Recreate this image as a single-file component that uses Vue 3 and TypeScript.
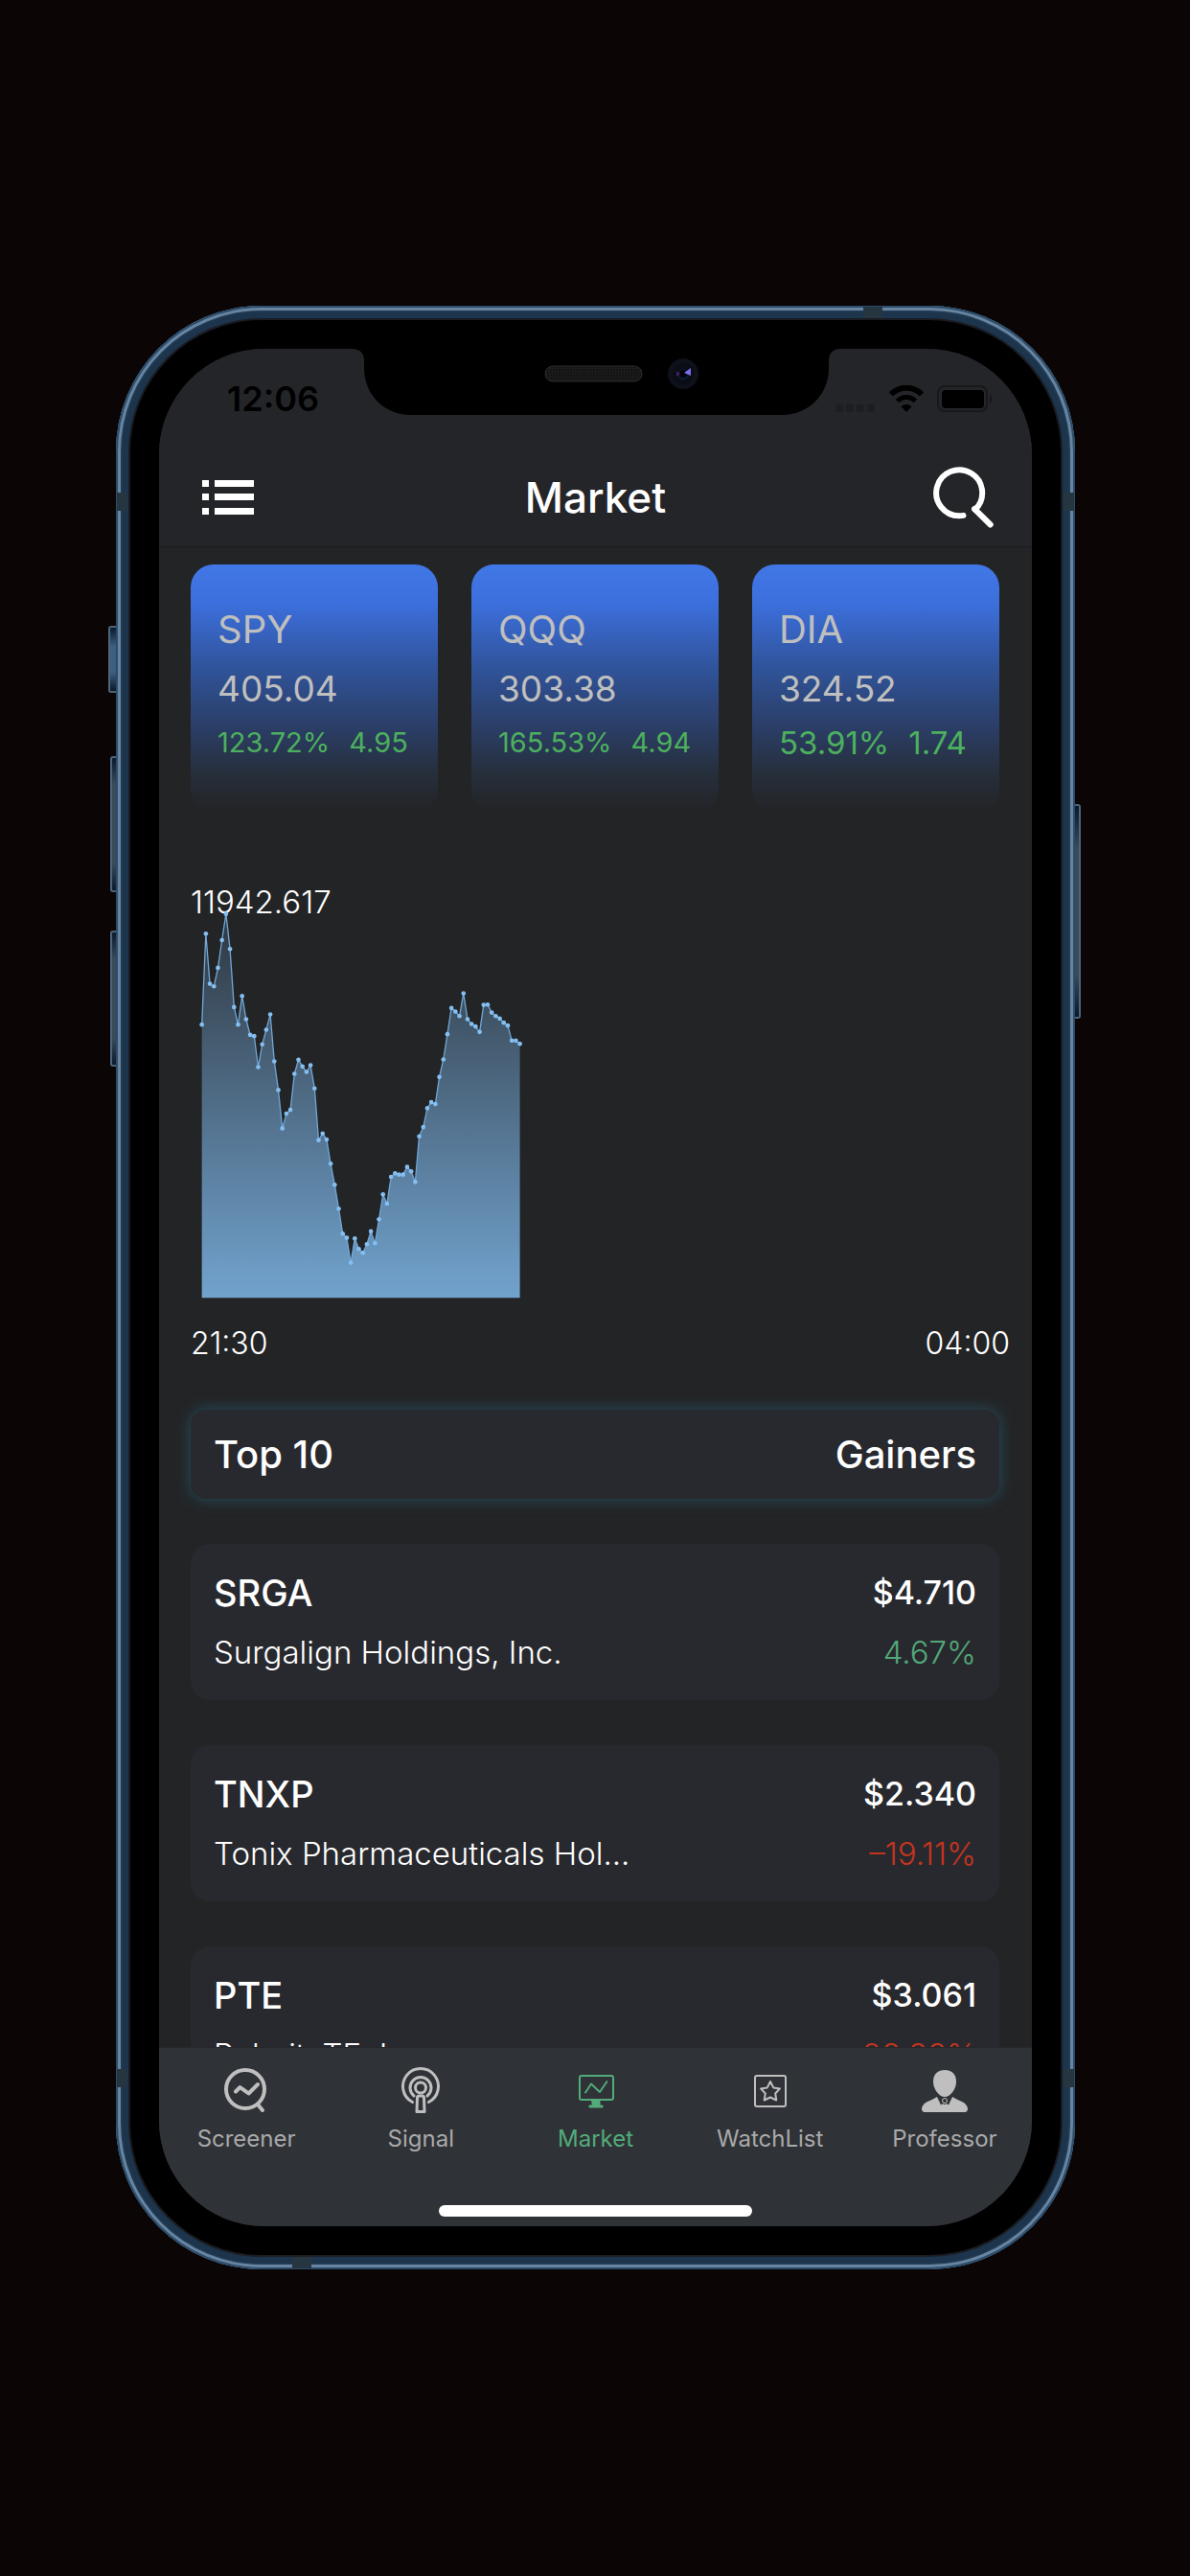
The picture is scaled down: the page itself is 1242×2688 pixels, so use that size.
<script setup lang="ts">
interface Fund {
  symbol: string
  price: string
  percent: string
  change: string
}

interface Stock {
  symbol: string
  name: string
  price: string
  percent: string
  down: boolean
}

interface Tab {
  id: string
  label: string
}

const funds: Fund[] = [
  { symbol: 'SPY', price: '405.04', percent: '123.72%', change: '4.95' },
  { symbol: 'QQQ', price: '303.38', percent: '165.53%', change: '4.94' },
  { symbol: 'DIA', price: '324.52', percent: '53.91%', change: '1.74' },
]

const stocks: Stock[] = [
  { symbol: 'SRGA', name: 'Surgalign Holdings, Inc.', price: '$4.710', percent: '4.67%', down: false },
  { symbol: 'TNXP', name: 'Tonix Pharmaceuticals Hol...', price: '$2.340', percent: '–19.11%', down: true },
  { symbol: 'PTE', name: 'PolarityTE, Inc.', price: '$3.061', percent: '–28.38%', down: true },
]

const tabs: Tab[] = [
  { id: 'screener', label: 'Screener' },
  { id: 'signal', label: 'Signal' },
  { id: 'market', label: 'Market' },
  { id: 'watchlist', label: 'WatchList' },
  { id: 'professor', label: 'Professor' },
]
const activeTab = 'market'

// Intraday samples, measured downwards from the chart's high mark.
const samples: number[] = [
  492, 216, 368, 376, 319, 235, 156, 262, 439, 492, 405, 475, 523, 527, 621, 552,
  507, 461, 603, 690, 806, 762, 750, 641, 598, 619, 635, 615, 685, 842, 822, 840,
  914, 978, 1050, 1126, 1138, 1214, 1140, 1172, 1184, 1158, 1119, 1155, 1082, 1007,
  1035, 954, 943, 947, 947, 924, 937, 969, 831, 803, 745, 727, 733, 651, 597, 521,
  441, 452, 466, 397, 475, 490, 498, 514, 432, 431, 455, 466, 473, 486, 495, 540,
  540, 550,
]
const startX = 35
const stepX = 12.62
const scaleY = 1.033
const baseline = 1364
const points = samples.map((v, i) => ({ x: startX + i * stepX, y: Math.round(v * scaleY) }))
const line = points.map((p) => `${p.x.toFixed(1)},${p.y}`).join(' ')
const lastX = points[points.length - 1].x.toFixed(1)
const area = `${startX},${baseline} ${line} ${lastX},${baseline}`
</script>

<template>
  <main class="page">
    <div class="phone">
      <span class="key key-mute"></span>
      <span class="key key-up"></span>
      <span class="key key-down"></span>
      <span class="key key-power"></span>
      <span class="band band-v band-lt"></span>
      <span class="band band-v band-lb"></span>
      <span class="band band-v band-rt"></span>
      <span class="band band-v band-rb"></span>
      <span class="band band-h band-top"></span>
      <span class="band band-h band-bottom"></span>

      <div class="screen">
        <svg class="notch" viewBox="0 0 509 70" aria-hidden="true">
          <defs>
            <pattern id="mesh" width="3" height="3" patternUnits="userSpaceOnUse">
              <rect width="3" height="3" fill="#1c1c1c" />
              <rect width="1" height="1" fill="#0a0a0a" />
              <rect x="2" y="1" width="1" height="1" fill="#0a0a0a" />
            </pattern>
          </defs>
          <path d="M0 0C8 0 12 5 12 13V22C13 48 33 69 61 69H448C476 69 496 48 497 22V13C497 5 501 0 509 0Z" fill="#000" />
          <rect x="201" y="18" width="101" height="16" rx="8" fill="url(#mesh)" stroke="#2c2c2c" stroke-width="1" />
          <circle cx="345" cy="26" r="16" fill="#0e1119" />
          <circle cx="345" cy="26" r="11" fill="#0a0c16" />
          <circle cx="345" cy="27" r="6" fill="#081a2e" />
          <circle cx="345" cy="26" r="4" fill="#02040a" />
          <path d="M346 25L353 20V28Z" fill="#7a6fe8" />
          <path d="M338 23L342 26L338 29Z" fill="#45205f" />
        </svg>

        <header class="top">
          <div class="status">
            <time class="clock">12:06</time>
            <div class="indicators">
              <svg width="42" height="8" viewBox="0 0 42 8" aria-hidden="true">
                <rect v-for="n in 4" :key="n" :x="(n - 1) * 11" y="0" width="8" height="8" rx="2" fill="#1d1e21" />
              </svg>
              <svg width="38" height="28" viewBox="0 0 38 28" aria-hidden="true">
                <path d="M3 9.500C12 0.500 26 0.500 35 9.500" fill="none" stroke="#000" stroke-width="6" />
                <path d="M9.500 16.500C15 11 23 11 28.500 16.500" fill="none" stroke="#000" stroke-width="5" />
                <path d="M19 28L13.500 22.200C16.500 19.300 21.500 19.300 24.500 22.200Z" fill="#000" />
              </svg>
              <svg width="59" height="28" viewBox="0 0 59 28" aria-hidden="true">
                <rect x="1" y="1" width="51" height="26" rx="7" fill="none" stroke="#17181a" stroke-width="2" />
                <rect x="5" y="5" width="44" height="19" rx="4" fill="#000" />
                <path d="M55 10C58 11 59 17 55 19Z" fill="#17181a" />
              </svg>
            </div>
          </div>
          <div class="bar">
            <button type="button" class="icon-button" aria-label="Menu">
              <svg width="54" height="36" viewBox="0 0 54 36" fill="#fff" aria-hidden="true">
                <path d="M0 0H7V7H0ZM13 0H54V7H13ZM0 14H7V21H0ZM13 14H54V21H13ZM0 29H7V36H0ZM13 29H54V36H13Z" />
              </svg>
            </button>
            <h1 class="title">Market</h1>
            <button type="button" class="icon-button" aria-label="Search">
              <svg width="64" height="64" viewBox="0 0 64 64" fill="none" stroke="#fff" stroke-width="6" stroke-linecap="round" stroke-linejoin="round" aria-hidden="true">
                <path d="M32.500 50.900Q30 51.300 28.300 51.300A24 24 0 1 1 44.700 44.700" />
                <path d="M44 44L60.700 60.500" />
              </svg>
            </button>
          </div>
        </header>

        <section class="feed">
          <div class="funds">
            <article v-for="fund in funds" :key="fund.symbol" class="fund">
              <h2 class="fund-symbol">{{ fund.symbol }}</h2>
              <p class="fund-price">{{ fund.price }}</p>
              <p class="fund-change" :class="{ roomy: fund.symbol === 'DIA' }">
                <span>{{ fund.percent }}</span><span>{{ fund.change }}</span>
              </p>
            </article>
          </div>

          <figure class="chart">
            <p class="chart-high">11942.617</p>
            <svg class="chart-plot" viewBox="0 171 2535 1193" role="img" aria-label="Intraday index level">
              <defs>
                <linearGradient id="fade" x1="0" y1="161" x2="0" y2="1364" gradientUnits="userSpaceOnUse">
                  <stop offset="0" stop-color="#7ebaf0" stop-opacity="0.12" />
                  <stop offset="1" stop-color="#7cb4e4" stop-opacity="0.88" />
                </linearGradient>
              </defs>
              <polygon :points="area" fill="url(#fade)" />
              <polyline :points="line" fill="none" stroke="#70a6d6" stroke-width="4" />
              <circle v-for="(p, i) in points" :key="i" :cx="p.x" :cy="p.y" r="7" fill="#85bff2" />
            </svg>
            <figcaption class="chart-times">
              <time>21:30</time>
              <time>04:00</time>
            </figcaption>
          </figure>

          <div class="picker">
            <span>Top 10</span>
            <button type="button">Gainers</button>
          </div>

          <ul class="stocks">
            <li v-for="stock in stocks" :key="stock.symbol" class="stock">
              <div class="stock-line">
                <span class="stock-symbol">{{ stock.symbol }}</span>
                <span class="stock-price">{{ stock.price }}</span>
              </div>
              <div class="stock-line stock-detail">
                <span>{{ stock.name }}</span>
                <span class="stock-percent" :class="{ down: stock.down }">{{ stock.percent }}</span>
              </div>
            </li>
          </ul>
        </section>

        <footer class="bottom">
          <nav class="tabs">
            <a v-for="tab in tabs" :key="tab.id" :href="'#' + tab.id" class="tab" :class="{ active: tab.id === activeTab }">
              <svg v-if="tab.id === 'screener'" width="48" height="48" viewBox="0 0 48 48" fill="none" stroke="currentColor" stroke-width="4" stroke-linecap="round" stroke-linejoin="round" aria-hidden="true">
                <circle cx="23" cy="23" r="20" />
                <path d="M13 25.500L17.500 21L26.500 27.500L36 18" />
                <path d="M36 39L41 45" />
              </svg>
              <svg v-else-if="tab.id === 'signal'" width="48" height="48" viewBox="0 0 48 48" fill="none" stroke="currentColor" stroke-width="3" stroke-linecap="round" stroke-linejoin="round" aria-hidden="true">
                <circle cx="24" cy="21.500" r="5.500" />
                <path d="M17 30A11 11 0 1 1 31 30" />
                <path d="M15.500 36.500A18.500 18.500 0 1 1 32.500 36.500" />
                <path d="M20.500 32Q20.500 30 22.500 30H25.500Q27.500 30 27.500 32L28 46.500H20Z" />
              </svg>
              <svg v-else-if="tab.id === 'market'" width="48" height="48" viewBox="0 0 48 48" fill="none" stroke="currentColor" stroke-width="2" stroke-linecap="round" stroke-linejoin="round" aria-hidden="true">
                <rect x="7" y="9" width="35" height="25" rx="2" />
                <path d="M13 26.500L19 17.500L28 26L35.500 15" />
                <path d="M20 35H28V40H31V42H17V40H20Z" fill="currentColor" stroke-width="1" />
              </svg>
              <svg v-else-if="tab.id === 'watchlist'" width="48" height="48" viewBox="0 0 48 48" fill="none" stroke="currentColor" stroke-width="2" stroke-linejoin="round" aria-hidden="true">
                <rect x="8" y="9" width="32" height="32" rx="2" />
                <path d="M24 15L27.200 21.400L34 22.400L29.200 27.500L30.300 34.500L24 31.500L17.700 34.500L18.800 27.500L14 22.400L20.800 21.400Z" />
              </svg>
              <svg v-else width="48" height="48" viewBox="0 0 48 48" fill="currentColor" aria-hidden="true">
                <path d="M24 3C31 3 36 7 36 15C36 23 30 31 24 31C18 31 12 23 12 15C12 7 17 3 24 3Z" />
                <path d="M16 31L20 39.500L22 38Q24 40 26 38L28 39.500L32 31Q36 33.500 43 36.500Q48 39.500 48 44Q47.500 47 45 47H3Q0.500 47 0 44Q0 39.500 5 36.500Q12 33.500 16 31Z" />
                <circle cx="24" cy="35" r="2.500" fill="none" stroke="currentColor" stroke-width="1" />
              </svg>
              <span class="tab-label">{{ tab.label }}</span>
            </a>
          </nav>
          <div class="home"></div>
        </footer>
      </div>
    </div>
  </main>
</template>

<style>
body {
  margin: 0;
  background: #0b0505;
}
</style>

<style scoped>
.page {
  box-sizing: border-box;
  display: flex;
  align-items: center;
  min-height: 100vh;
  padding: 24px 120px 25px 121px;
  font-family: Inter, "Liberation Sans", sans-serif;
  color: #fff;
}

h1, h2, p, figure, ul {
  margin: 0;
  padding: 0;
  font-weight: 400;
}

button {
  border: 0;
  padding: 0;
  background: none;
  color: inherit;
  font: inherit;
}

.phone {
  box-sizing: border-box;
  position: relative;
  flex: 1;
  aspect-ratio: 1001 / 2049;
  padding: 45px;
  border-radius: 152px;
  background: #000;
  box-shadow:
    inset 0 0 0 2px #2b4c69,
    inset 0 0 0 5px #6884a0,
    inset 0 0 0 7px #203a52,
    inset 0 0 0 13px #1c344c,
    inset 0 0 0 15px #1b1c22;
}

.key {
  position: absolute;
  box-sizing: border-box;
  width: 6px;
  left: -6px;
  border: 2px solid #4c6579;
  border-right-width: 0;
  border-radius: 3px 0 0 3px;
  background: linear-gradient(#0a1a2c, #394a59 20%, #394a59 80%, #0a1a2c);
}

.key-mute {
  top: 334px;
  height: 70px;
  width: 8px;
  left: -8px;
  background: linear-gradient(#0a1a2c, #3d5f82 30%, #3d5f82 70%, #0a1a2c);
}

.key-up {
  top: 470px;
  height: 142px;
}

.key-down {
  top: 652px;
  height: 142px;
}

.key-power {
  top: 520px;
  left: auto;
  right: -6px;
  height: 224px;
  border-width: 2px 2px 2px 0;
  border-radius: 0 3px 3px 0;
}

.band {
  position: absolute;
  background: #263640;
}

.band-v {
  width: 11px;
  height: 19px;
}

.band-h {
  width: 20px;
  height: 12px;
}

.band-lt {
  left: 1px;
  top: 195px;
}

.band-rt {
  right: 1px;
  top: 195px;
}

.band-lb {
  left: 1px;
  bottom: 190px;
}

.band-rb {
  right: 1px;
  bottom: 190px;
}

.band-top {
  top: 1px;
  right: 201px;
}

.band-bottom {
  bottom: 1px;
  left: 184px;
}

.screen {
  position: relative;
  display: flex;
  flex-direction: column;
  height: 100%;
  overflow: hidden;
  border-radius: 110px;
  background: #232426;
}

.notch {
  position: absolute;
  top: 0;
  left: 50%;
  width: 509px;
  margin-left: -254px;
}

.top {
  border-bottom: 1px solid #1b1c1e;
  background: #242529;
}

.status {
  display: flex;
  align-items: center;
  justify-content: space-between;
  height: 104px;
  padding: 0 40px 0 71px;
}

.clock {
  color: #000;
  font-size: 36px;
  font-weight: 600;
}

.indicators {
  display: flex;
  align-items: flex-end;
  gap: 13px;
}

.bar {
  display: flex;
  align-items: center;
  justify-content: space-between;
  height: 102px;
  padding: 0 40px;
}

.icon-button {
  display: flex;
  justify-content: center;
  width: 64px;
}

.title {
  font-size: 44px;
  font-weight: 500;
}

.feed {
  flex: 1 1 0;
  min-height: 0;
  overflow: hidden;
  padding: 18px 34px 0 33px;
}

.funds {
  display: flex;
  gap: 35px;
}

.fund {
  box-sizing: border-box;
  flex: 1;
  display: flex;
  flex-direction: column;
  gap: 14px;
  height: 258px;
  padding: 44px 0 0 28px;
  border-radius: 24px;
  background: linear-gradient(#4177e6, #3c6fdc 16%, #30539a 42%, #2a3c62 68%, #262f3c 84%, #232426);
  color: #bfbfbf;
}

.fund-symbol {
  font-size: 40px;
  line-height: 48px;
}

.fund-price {
  font-size: 37px;
  line-height: 48px;
}

.fund-change {
  display: flex;
  gap: 20px;
  color: #4cb05e;
  font-size: 29px;
  line-height: 36px;
}

.fund-change.roomy {
  font-size: 33px;
}

.chart {
  margin-top: 78px;
}

.chart-high {
  font-size: 33px;
  font-weight: 300;
  line-height: 32px;
}

.chart-plot {
  display: block;
  width: 100%;
  overflow: visible;
}

.chart-times {
  display: flex;
  justify-content: space-between;
  margin: 28px -11px 0 0;
  font-size: 32px;
  font-weight: 300;
  line-height: 40px;
}

.picker {
  display: flex;
  align-items: center;
  justify-content: space-between;
  height: 93px;
  margin-top: 49px;
  padding: 0 24px;
  border-radius: 16px;
  background: #28292e;
  box-shadow: 0 0 16px #25505f;
  font-size: 40px;
  font-weight: 500;
}

.stocks {
  display: flex;
  flex-direction: column;
  gap: 47px;
  margin-top: 47px;
  list-style: none;
}

.stock {
  display: flex;
  flex-direction: column;
  gap: 14px;
  padding: 27px 24px 26px;
  border-radius: 20px;
  background: #28292e;
}

.stock-line {
  display: flex;
  align-items: center;
  justify-content: space-between;
  line-height: 48px;
}

.stock-symbol {
  font-size: 38px;
  font-weight: 500;
}

.stock-price {
  font-size: 34px;
  font-weight: 500;
}

.stock-detail {
  font-size: 33px;
  font-weight: 300;
}

.stock-percent {
  color: #52a878;
}

.stock-percent.down {
  color: #c5341f;
}

.bottom {
  display: flex;
  flex-direction: column;
  justify-content: space-between;
  align-items: center;
  box-sizing: border-box;
  height: 187px;
  padding: 20px 0 10px;
  border-top: 1px solid #27282b;
  background: #2f3236;
}

.tabs {
  display: flex;
  width: 100%;
}

.tab {
  flex: 1 1 0;
  display: flex;
  flex-direction: column;
  align-items: center;
  gap: 13px;
  color: #bfbfbf;
  text-decoration: none;
}

.tab-label {
  color: #a9a9aa;
  font-size: 24px;
  line-height: 28px;
}

.active,
.active .tab-label {
  color: #52ab7b;
}

.home {
  width: 36%;
  height: 12px;
  border-radius: 6px;
  background: #fff;
}
</style>
